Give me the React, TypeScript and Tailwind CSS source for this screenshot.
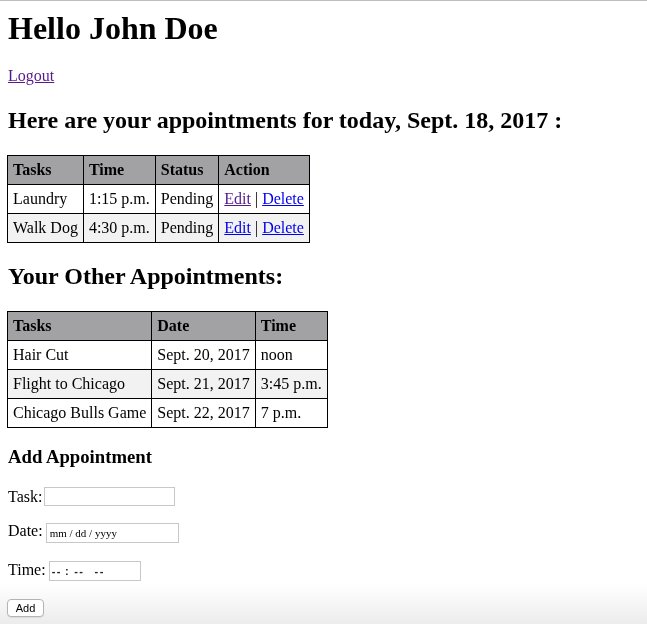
import React from "react";

const today = [
  { task: "Laundry", time: "1:15 p.m.", status: "Pending", visited: true },
  { task: "Walk Dog", time: "4:30 p.m.", status: "Pending", visited: false },
];

const other = [
  { task: "Hair Cut", date: "Sept. 20, 2017", time: "noon" },
  { task: "Flight to Chicago", date: "Sept. 21, 2017", time: "3:45 p.m." },
  { task: "Chicago Bulls Game", date: "Sept. 22, 2017", time: "7 p.m." },
];

const cell = "border border-black px-[5px] py-[5px] leading-[18px] text-left align-middle whitespace-nowrap";

export default function App() {
  return (
    <div className="min-h-[624px] border-t border-[#bdbdbd] pl-2 font-['Liberation_Serif',serif] text-[16px] text-black">
      {/* Header */}
      <h1 className="mt-[9px] text-[32px] font-bold leading-[37px]">Hello John Doe</h1>
      <div className="mt-[20px] leading-[18px]">
        <a href="#" className="text-[#551a8b] underline">Logout</a>
      </div>

      {/* Today */}
      <h2 className="mt-[21px] text-[24px] font-bold leading-[28px]">
        Here are your appointments for today, Sept. 18, 2017 :
      </h2>
      <table className="-ml-[1px] mt-[21px] border-collapse border border-black">
        <thead>
          <tr className="bg-[#a2a2a5]">
            <th className={cell}>Tasks</th>
            <th className={cell}>Time</th>
            <th className={cell}>Status</th>
            <th className={cell}>Action</th>
          </tr>
        </thead>
        <tbody>
          {today.map((r, i) => (
            <tr key={r.task} className={i % 2 === 1 ? "bg-[#f2f2f2]" : "bg-white"}>
              <td className={cell}>{r.task}</td>
              <td className={cell}>{r.time}</td>
              <td className={cell}>{r.status}</td>
              <td className={cell}>
                <a href="#" className={r.visited ? "text-[#551a8b] underline" : "text-[#0000ee] underline"}>Edit</a>
                {" | "}
                <a href="#" className="text-[#0000ee] underline">Delete</a>
              </td>
            </tr>
          ))}
        </tbody>
      </table>

      {/* Other */}
      <h2 className="mt-[19px] text-[24px] font-bold leading-[28px]">Your Other Appointments:</h2>
      <table className="-ml-[1px] mt-[21px] border-collapse border border-black">
        <thead>
          <tr className="bg-[#a2a2a5]">
            <th className={cell}>Tasks</th>
            <th className={cell}>Date</th>
            <th className={cell}>Time</th>
          </tr>
        </thead>
        <tbody>
          {other.map((r, i) => (
            <tr key={r.task} className={i % 2 === 1 ? "bg-[#f2f2f2]" : "bg-white"}>
              <td className={cell}>{r.task}</td>
              <td className={cell}>{r.date}</td>
              <td className={cell}>{r.time}</td>
            </tr>
          ))}
        </tbody>
      </table>

      {/* Add form */}
      <h3 className="mt-[18px] text-[18.72px] font-bold leading-[22px]">Add Appointment</h3>
      <form className="flex flex-col items-start" onSubmit={(e) => e.preventDefault()}>
        <div className="mt-[19px] flex items-start">
          <label className="mt-[1px] leading-[18px]">Task:</label>
          <input type="text" className="ml-[2px] h-[19px] w-[131px] border border-[#c8c8c8] bg-white px-[2px] outline-none" />
        </div>
        <div className="mt-[17px] flex items-start">
          <label className="-mt-[1px] leading-[18px]">Date:</label>
          <input
            type="text"
            placeholder="mm / dd / yyyy"
            className="ml-[3px] h-[20px] w-[133px] border border-[#c8c8c8] bg-white px-[3px] text-[11px] outline-none placeholder:text-black"
          />
        </div>
        <div className="mt-[18px] flex items-start">
          <label className="leading-[18px]">Time:</label>
          <div className="ml-[3px] flex h-[20px] w-[92px] items-center border border-[#c8c8c8] bg-white pl-[2px] font-['Liberation_Sans',sans-serif] text-[11px] font-bold tracking-[1.5px] text-[#222]">
            <span>--</span>
            <span className="ml-[3px]">:</span>
            <span className="ml-[4px]">--</span>
            <span className="ml-[10px]">--</span>
          </div>
        </div>
        <button
          type="submit"
          className="-ml-[1px] mt-[18px] h-[18px] w-[37px] rounded-[4px] border border-[#b4b4b4] bg-white font-['Liberation_Sans',sans-serif] text-[11px] leading-[14px] shadow-[0_1px_1px_rgba(0,0,0,0.08)]"
        >
          Add
        </button>
      </form>

      <div className="pointer-events-none fixed inset-x-0 bottom-0 -z-10 h-[40px] bg-linear-to-b from-white to-[#ececec]" />
    </div>
  );
}
